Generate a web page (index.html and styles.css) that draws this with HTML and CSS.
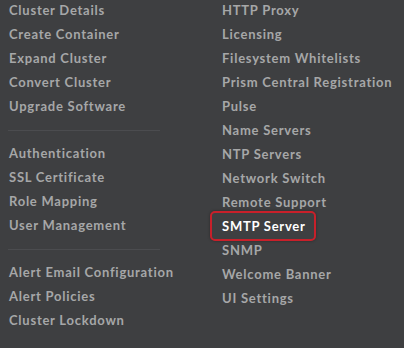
FILE: index.html
```html
<!DOCTYPE html>
<html>
<head>
<meta charset="utf-8">
<link rel="stylesheet" href="styles.css">
</head>
<body>
<div class="menu">
  <div class="col col-left">
    <div class="item">Cluster Details</div>
    <div class="item">Create Container</div>
    <div class="item">Expand Cluster</div>
    <div class="item">Convert Cluster</div>
    <div class="item">Upgrade Software</div>
    <div class="divider"></div>
    <div class="item">Authentication</div>
    <div class="item">SSL Certificate</div>
    <div class="item">Role Mapping</div>
    <div class="item">User Management</div>
    <div class="divider"></div>
    <div class="item">Alert Email Configuration</div>
    <div class="item">Alert Policies</div>
    <div class="item">Cluster Lockdown</div>
  </div>
  <div class="col col-right">
    <div class="item">HTTP Proxy</div>
    <div class="item">Licensing</div>
    <div class="item">Filesystem Whitelists</div>
    <div class="item">Prism Central Registration</div>
    <div class="item">Pulse</div>
    <div class="item">Name Servers</div>
    <div class="item">NTP Servers</div>
    <div class="item">Network Switch</div>
    <div class="item">Remote Support</div>
    <div class="item"><span class="highlight">SMTP Server</span></div>
    <div class="item">SNMP</div>
    <div class="item">Welcome Banner</div>
    <div class="item">UI Settings</div>
  </div>
</div>
</body>
</html>
```
FILE: styles.css
```css
html, body {
  margin: 0;
  padding: 0;
  background: #3e3f41;
}
body {
  width: 404px;
  height: 348px;
  overflow: hidden;
  font-family: Lato, "Open Sans", sans-serif;
  font-weight: 700;
  font-size: 13px;
  color: #a6a7a8;
}
.menu {
  display: grid;
  grid-template-columns: 213px 1fr;
  padding-left: 9px;
}
.item {
  line-height: 20px;
  padding-bottom: 4px;
  white-space: nowrap;
  letter-spacing: 0.75px;
}
.divider {
  width: 152px;
  height: 1px;
  background: #4b4c4f;
  margin: 10px 0 12px -1px;
}
.highlight {
  position: relative;
  display: inline-block;
  color: #ffffff;
}
.highlight::after {
  content: "";
  position: absolute;
  top: -5px;
  bottom: -5px;
  left: -12px;
  right: -10px;
  border: 2px solid #c8202a;
  border-radius: 5px;
  box-shadow: 0 0 3px rgba(0,0,0,0.35);
}
```
